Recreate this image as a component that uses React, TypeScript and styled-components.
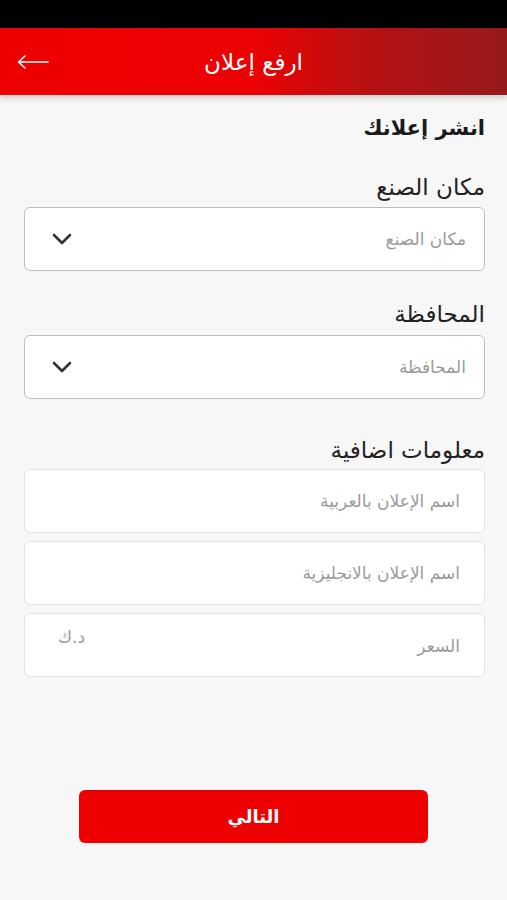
import styled, {createGlobalStyle} from 'styled-components';

const GlobalStyle = createGlobalStyle`
    html, body {
        margin: 0;
        padding: 0;
        background: #f7f7f7;
    }
    body {
        font-family: "DejaVu Sans", "Noto Sans", sans-serif;
    }
`;

const ChevronDown = () => (
    <svg width="22" height="14" viewBox="0 0 22 14">
        <path d="M3 3l8 8 8-8" fill="none" stroke="#333" strokeWidth="2.6" strokeLinecap="round" strokeLinejoin="round"/>
    </svg>
);

const ArrowLeft = () => (
    <svg width="34" height="14" viewBox="0 0 34 14">
        <path d="M32 7H3M9 1L2.5 7 9 13" fill="none" stroke="#fff" strokeWidth="1.6" strokeLinecap="round" strokeLinejoin="round"/>
    </svg>
);


/**
 * 上傳廣告表單
 */
const App = () => {
    return <Page>
        <GlobalStyle/>
        <StatusBar/>

        <Header>
            <BackButton type="button"><ArrowLeft/></BackButton>
            <HeaderTitle>ارفع إعلان</HeaderTitle>
        </Header>

        <Form dir="rtl">
            <Title>انشر إعلانك</Title>

            <Label $top={33} $bottom={7}>مكان الصنع</Label>
            <Select>
                <Placeholder>مكان الصنع</Placeholder>
                <ChevronDown/>
            </Select>

            <Label $top={30} $bottom={8}>المحافظة</Label>
            <Select>
                <Placeholder>المحافظة</Placeholder>
                <ChevronDown/>
            </Select>

            <Label $top={38} $bottom={6}>معلومات اضافية</Label>
            <Fields>
                <Input><Placeholder>اسم الإعلان بالعربية</Placeholder></Input>
                <Input><Placeholder>اسم الإعلان بالانجليزية</Placeholder></Input>
                <Input>
                    <Placeholder $shift={2}>السعر</Placeholder>
                    <Currency>د.ك</Currency>
                </Input>
            </Fields>
        </Form>

        <Footer>
            <NextButton type="button">التالي</NextButton>
        </Footer>
    </Page>;
};

export default App;



const Page = styled.div`
    width: 507px;
    min-height: 900px;
    display: flex;
    flex-direction: column;
    background: #f7f7f7;
`;

const StatusBar = styled.div`
    height: 28px;
    background: #000;
`;

const Header = styled.header`
    height: 67px;
    position: relative;
    display: flex;
    align-items: center;
    justify-content: center;
    background: linear-gradient(90deg, #ee0000 0%, #ec0203 50%, #b81113 72%, #961a1b 100%);
    box-shadow: 0 3px 6px rgba(0, 0, 0, 0.18);
`;

const BackButton = styled.button`
    position: absolute;
    left: 16px;
    top: 50%;
    transform: translateY(-50%);
    display: flex;
    padding: 0;
    border: none;
    background: none;
`;

const HeaderTitle = styled.h1`
    margin: 0;
    color: #fff;
    font-size: 23px;
    font-weight: normal;
`;

const Form = styled.div`
    display: flex;
    flex-direction: column;
    padding: 20px 22px 0 24px;
`;

const Title = styled.h2`
    margin: 0;
    font-size: 21px;
    font-weight: bold;
    color: #1a1a1a;
    line-height: 26px;
`;

const Label = styled.div<{ $top: number; $bottom: number }>`
    margin-top: ${p => p.$top}px;
    margin-bottom: ${p => p.$bottom}px;
    font-size: 23px;
    color: #222;
    line-height: 26px;
`;

const Select = styled.div`
    height: 64px;
    box-sizing: border-box;
    display: flex;
    align-items: center;
    justify-content: space-between;
    padding: 0 18px 0 26px;
    background: #fff;
    border: 1.5px solid #bdbdbd;
    border-radius: 6px;
`;

const Fields = styled.div`
    display: flex;
    flex-direction: column;
    gap: 8px;
`;

const Input = styled.div`
    height: 64px;
    box-sizing: border-box;
    display: flex;
    align-items: center;
    justify-content: space-between;
    padding: 0 24px 0 33px;
    background: #fff;
    border: 1px solid #e3e3e3;
    border-radius: 6px;
`;

const Placeholder = styled.span<{ $shift?: number }>`
    margin-top: ${p => p.$shift ?? 0}px;
    font-size: 17px;
    color: #9a9a9a;
`;

const Currency = styled.span`
    margin-bottom: 16px;
    font-size: 17px;
    color: #9a9a9a;
`;

const Footer = styled.div`
    display: flex;
    justify-content: center;
    padding-top: 113px;
`;

const NextButton = styled.button`
    width: 349px;
    height: 53px;
    border: none;
    border-radius: 6px;
    background: #ee0000;
    color: #fff;
    font-family: "DejaVu Sans", sans-serif;
    font-size: 18px;
    font-weight: bold;
`;
